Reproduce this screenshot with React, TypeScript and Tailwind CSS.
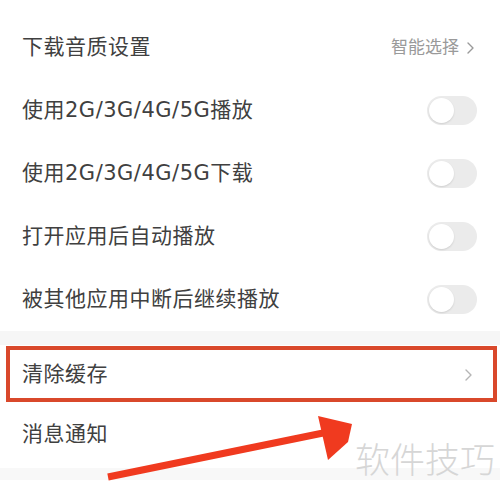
import React from 'react';

const font = { fontFamily: '"DejaVu Sans", "Noto Sans CJK SC", sans-serif' };

function Toggle() {
  return (
    <div className="w-[50px] h-[29px] rounded-full bg-[#ebebeb] flex items-center px-[2px]">
      <div className="w-[25px] h-[25px] rounded-full bg-white shadow-[0_1px_2px_rgba(0,0,0,0.12)]" />
    </div>
  );
}

function Chevron({ className }: { className?: string }) {
  return (
    <svg className={className} width="9" height="14" viewBox="0 0 9 14" fill="none">
      <path d="M2 2l5 5-5 5" stroke="currentColor" strokeWidth="1.4" strokeLinecap="round" strokeLinejoin="round" />
    </svg>
  );
}

const toggles = [
  '使用2G/3G/4G/5G播放',
  '使用2G/3G/4G/5G下载',
  '打开应用后自动播放',
  '被其他应用中断后继续播放',
];

const label = 'text-[21px] tracking-[0.5px] text-[#404040]';

export default function App() {
  return (
    <div className="relative w-[500px] h-[500px] bg-white overflow-hidden" style={font}>
      <div className="pt-[16px]">
        <div className="h-[63px] flex items-center justify-between pl-[22px] pr-[25px]">
          <span className={label}>下载音质设置</span>
          <span className="flex items-center gap-[7px] text-[17px] text-[#9a9a9a]">
            智能选择
            <Chevron className="text-[#9a9a9a]" />
          </span>
        </div>
        {toggles.map(t => (
          <div key={t} className="h-[63px] flex items-center justify-between pl-[22px] pr-[23px]">
            <span className={label}>{t}</span>
            <Toggle />
          </div>
        ))}
      </div>

      <div className="h-[14px] bg-[#f6f6f6]" />

      <div className="relative h-[56px] flex items-center justify-between pl-[22px] pr-[27px]">
        <span className={`${label} mt-[4px]`}>清除缓存</span>
        <Chevron className="text-[#b5b5b5] mt-[4px]" />
        <div className="absolute left-[6px] right-[3px] top-[1px] bottom-[-1px] border-[4px] border-[#d9482b]" />
      </div>

      <div className="h-[67px] flex items-center pl-[22px]">
        <span className={label}>消息通知</span>
      </div>

      <div className="h-[12px] bg-[#f8f8f8]" />

      <span className="absolute left-[355px] top-[440px] text-[35px] leading-none text-[#d6d6d6]" style={{ fontFamily: '"Noto Sans CJK SC", sans-serif', fontWeight: 300 }}>软件技巧</span>

      <svg className="absolute left-0 top-0" width="500" height="500" viewBox="0 0 500 500">
        <line x1="108" y1="477" x2="328" y2="432" stroke="#f03a1f" strokeWidth="7" strokeLinecap="butt" />
        <polygon points="318,416 352,424 348,442 328,460" fill="#f03a1f" />
      </svg>
    </div>
  );
}
